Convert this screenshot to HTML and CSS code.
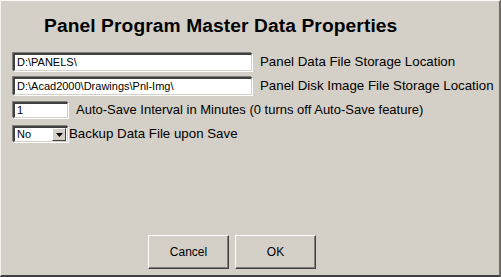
FILE: index.html
```html
<!DOCTYPE html>
<html>
<head>
  <title>Panel Program Master Data Properties</title>
  <link rel="stylesheet" href="styles.css">
</head>
<body>
  <div class="dialog">
    <h1 class="title">Panel Program Master Data Properties</h1>
    <div class="fields">
      <div class="row">
        <div class="field wide">D:\PANELS\</div>
        <span class="label">Panel Data File Storage Location</span>
      </div>
      <div class="row">
        <div class="field wide">D:\Acad2000\Drawings\Pnl-Img\</div>
        <span class="label">Panel Disk Image File Storage Location</span>
      </div>
      <div class="row short">
        <div class="field small">1</div>
        <span class="label narrow">Auto-Save Interval in Minutes (0 turns off Auto-Save feature)</span>
      </div>
      <div class="row short">
        <div class="field small combo">
          <span class="combo-text">No</span>
          <span class="combo-btn">
            <svg width="7" height="4" viewBox="0 0 7 4"><path d="M0 0h7L3.5 4z" fill="#000"/></svg>
          </span>
        </div>
        <span class="label tight">Backup Data File upon Save</span>
      </div>
    </div>
    <div class="buttons">
      <button class="btn">Cancel</button>
      <button class="btn">OK</button>
    </div>
  </div>
</body>
</html>
```

FILE: styles.css
```css
html, body {
  margin: 0;
  padding: 0;
  background: #d4d0c8;
}
.dialog {
  width: 501px;
  height: 277px;
  box-sizing: border-box;
  background: #d4d0c8;
  border-top: 1px solid #fbfaf6;
  border-left: 1px solid #f4f2ee;
  border-right: 2px solid #6e6c68;
  border-bottom: 2px solid #404040;
  display: flex;
  flex-direction: column;
  font-family: "Liberation Sans", Arial, sans-serif;
}
.title {
  margin: 14px 0 0 43px;
  font-size: 19.2px;
  font-weight: bold;
  line-height: 22px;
  letter-spacing: 0.1px;
  color: #000;
}
.fields {
  display: flex;
  flex-direction: column;
  gap: 6px;
  margin: 15px 0 0 11px;
}
.row {
  display: flex;
  align-items: center;
  height: 18px;
}
.row.short {
  height: 17px;
}
.row + .row.short {
  margin-top: 1px;
}
.field {
  box-sizing: border-box;
  height: 18px;
  background: #fff;
  border-top: 2px solid #404040;
  border-left: 2px solid #404040;
  border-right: 1px solid #d4d0c8;
  border-bottom: 1px solid #d4d0c8;
  box-shadow: -1px -1px 0 #808080, 1px 1px 0 #fff;
  font-size: 11px;
  line-height: 15px;
  padding-left: 2px;
  color: #000;
  white-space: nowrap;
  overflow: hidden;
}
.field.wide {
  width: 239px;
  margin: 1px 0 0 1px;
}
.field.small {
  width: 55px;
  height: 16px;
  line-height: 13px;
  margin: 1px 0 0 1px;
}
.combo {
  display: flex;
  justify-content: space-between;
  padding-right: 1px;
}
.combo-btn {
  width: 14px;
  height: 13px;
  box-sizing: border-box;
  background: #d4d0c8;
  border-top: 1px solid #fff;
  border-left: 1px solid #fff;
  border-right: 1px solid #404040;
  border-bottom: 1px solid #404040;
  display: flex;
  align-items: center;
  justify-content: center;
}
.label {
  font-size: 13.3px;
  margin-left: 8px;
  color: #000;
  white-space: nowrap;
}
.label.narrow {
  font-size: 13px;
}
.label.tight {
  margin-left: 1px;
}
.buttons {
  display: flex;
  justify-content: center;
  gap: 6px;
  margin-top: auto;
  margin-bottom: 6px;
  padding-right: 36px;
}
.btn {
  width: 81px;
  height: 34px;
  background: #d4d0c8;
  border-top: 1px solid #fff;
  border-left: 1px solid #fff;
  border-right: 1px solid #404040;
  border-bottom: 1px solid #404040;
  box-shadow: inset -1px -1px 0 #808080;
  font-family: "Liberation Sans", Arial, sans-serif;
  font-size: 12px;
  color: #000;
  padding: 0;
}
```
